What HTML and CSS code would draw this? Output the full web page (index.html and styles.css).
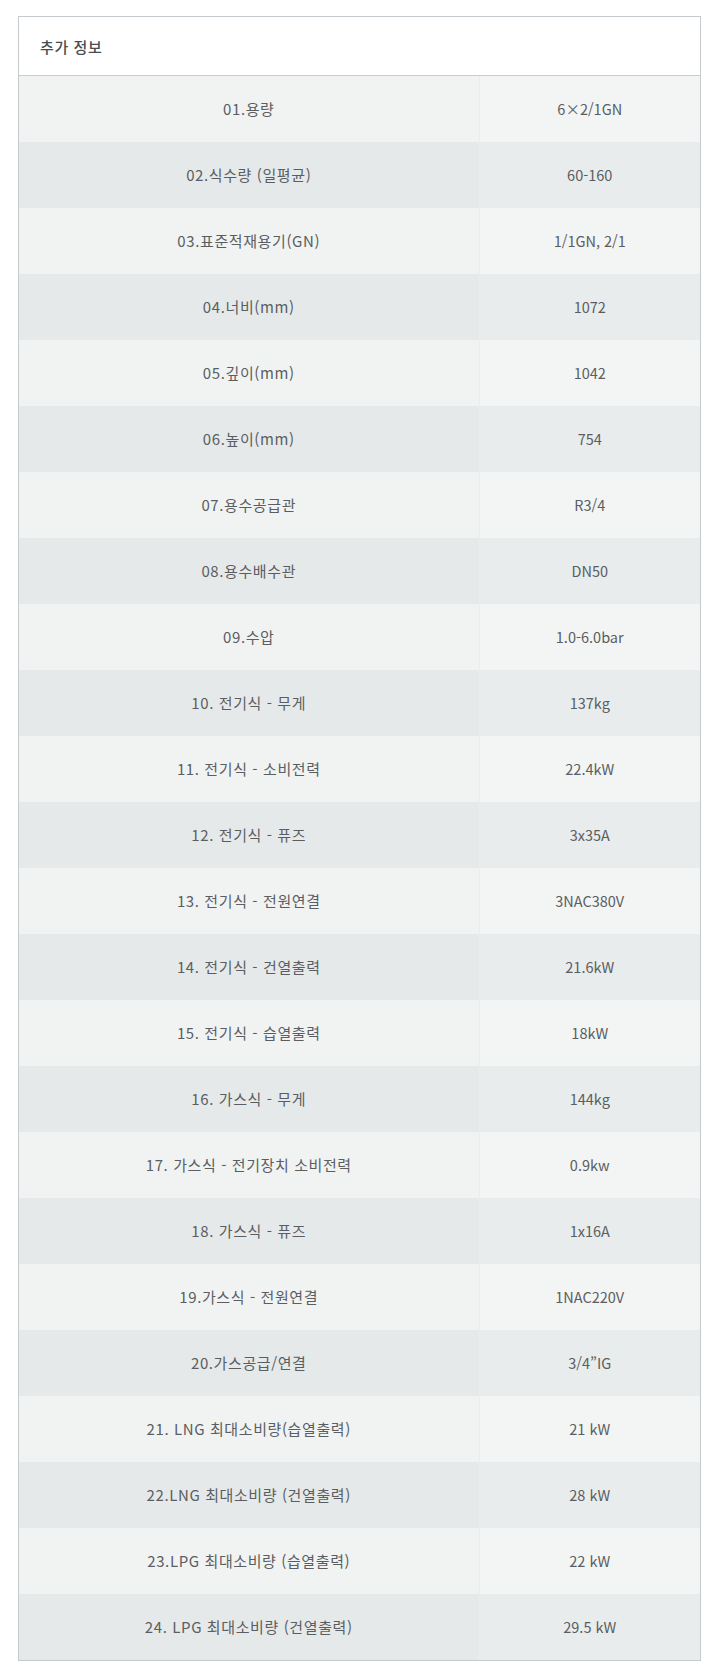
FILE: index.html
```html
<!DOCTYPE html>
<html lang="ko">
<head>
<meta charset="utf-8">
<title>추가 정보</title>
<link rel="stylesheet" href="styles.css">
</head>
<body>
<div class="page">
  <section class="panel">
    <h2 class="panel-title">추가 정보</h2>
    <table class="spec">
      <tbody>
        <tr><th>01.용량</th><td>6×2/1GN</td></tr>
        <tr><th>02.식수량 (일평균)</th><td>60-160</td></tr>
        <tr><th>03.표준적재용기(GN)</th><td>1/1GN, 2/1</td></tr>
        <tr><th>04.너비(mm)</th><td>1072</td></tr>
        <tr><th>05.깊이(mm)</th><td>1042</td></tr>
        <tr><th>06.높이(mm)</th><td>754</td></tr>
        <tr><th>07.용수공급관</th><td>R3/4</td></tr>
        <tr><th>08.용수배수관</th><td>DN50</td></tr>
        <tr><th>09.수압</th><td>1.0-6.0bar</td></tr>
        <tr><th>10. 전기식 - 무게</th><td>137kg</td></tr>
        <tr><th>11. 전기식 - 소비전력</th><td>22.4kW</td></tr>
        <tr><th>12. 전기식 - 퓨즈</th><td>3x35A</td></tr>
        <tr><th>13. 전기식 - 전원연결</th><td>3NAC380V</td></tr>
        <tr><th>14. 전기식 - 건열출력</th><td>21.6kW</td></tr>
        <tr><th>15. 전기식 - 습열출력</th><td>18kW</td></tr>
        <tr><th>16. 가스식 - 무게</th><td>144kg</td></tr>
        <tr><th>17. 가스식 - 전기장치 소비전력</th><td>0.9kw</td></tr>
        <tr><th>18. 가스식 - 퓨즈</th><td>1x16A</td></tr>
        <tr><th>19.가스식 - 전원연결</th><td>1NAC220V</td></tr>
        <tr><th>20.가스공급/연결</th><td>3/4”IG</td></tr>
        <tr><th>21. LNG 최대소비량(습열출력)</th><td>21 kW</td></tr>
        <tr><th>22.LNG 최대소비량 (건열출력)</th><td>28 kW</td></tr>
        <tr><th>23.LPG 최대소비량 (습열출력)</th><td>22 kW</td></tr>
        <tr><th>24. LPG 최대소비량 (건열출력)</th><td>29.5 kW</td></tr>
      </tbody>
    </table>
  </section>
</div>
</body>
</html>
```

FILE: styles.css
```css
html, body {
  margin: 0;
  padding: 0;
  background: #ffffff;
}

.page {
  padding: 16px 17px 16px 18px;
  font-family: "Noto Sans CJK KR", "Noto Sans", sans-serif;
  color: #5a5e62;
}

.panel {
  width: 683px;
  box-sizing: border-box;
  border: 1px solid #c4cacd;
  background: #ffffff;
}

.panel-title {
  margin: 0;
  height: 59px;
  box-sizing: border-box;
  padding: 0 21px;
  display: flex;
  align-items: center;
  font-size: 15px;
  font-weight: 500;
  letter-spacing: 0.6px;
  color: #4a4d50;
  border-bottom: 1px solid #c9cbcc;
}

.spec {
  width: 100%;
  border-collapse: collapse;
  table-layout: fixed;
}

.spec th,
.spec td {
  height: 66px;
  padding: 0 10px;
  box-sizing: border-box;
  text-align: center;
  vertical-align: middle;
  font-size: 15px;
  font-weight: 400;
  line-height: 20px;
  color: #5a5e62;
}

.spec th {
  width: 460px;
  letter-spacing: 0.6px;
  background: #f1f3f3;
}

.spec td {
  letter-spacing: 0;
  font-size: 14.5px;
  background: #f3f5f5;
  border-left: 1px solid #eaeded;
}

.spec tr:nth-child(even) th {
  background: #e6e9e9;
}

.spec tr:nth-child(even) td {
  background: #e9ecec;
}
```
